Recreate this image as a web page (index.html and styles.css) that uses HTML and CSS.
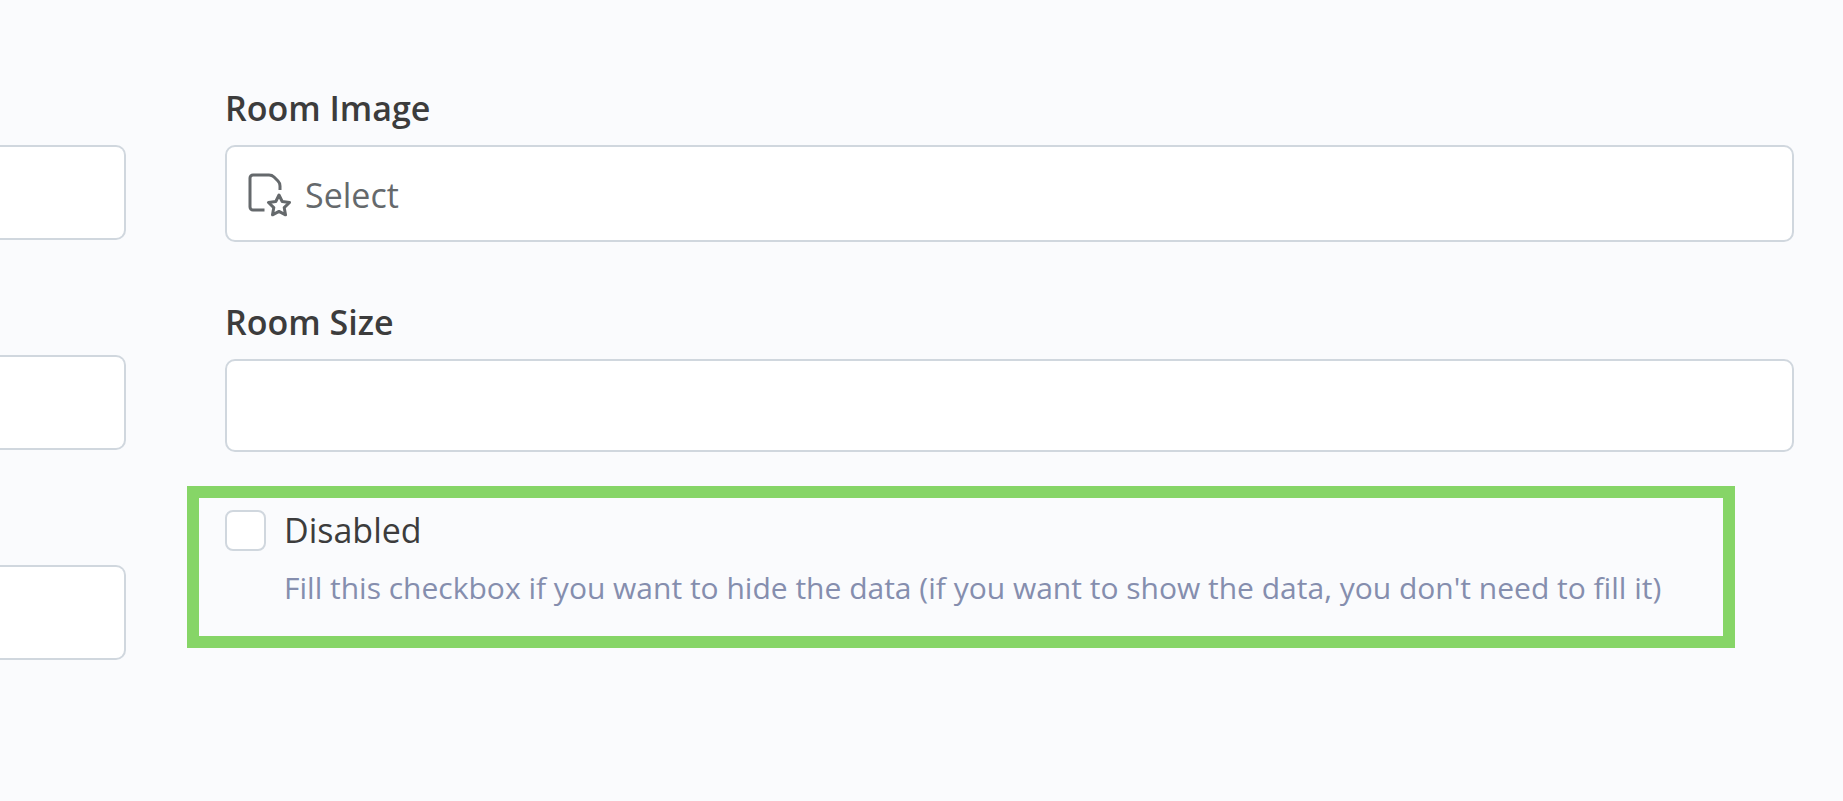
FILE: index.html
```html
<!DOCTYPE html>
<html lang="en">
<head>
<meta charset="utf-8">
<meta name="viewport" content="width=device-width, initial-scale=1">
<title>Room</title>
<link rel="stylesheet" href="styles.css">
</head>
<body>
<form class="form">
  <div class="side">
    <input class="control side-control" type="text" aria-label="Field 1">
    <input class="control side-control" type="text" aria-label="Field 2">
    <input class="control side-control" type="text" aria-label="Field 3">
  </div>
  <div class="main">
    <div class="field">
      <label class="label" for="room-image">Room Image</label>
      <button class="control picker" id="room-image" type="button">
        <svg class="picker-icon" viewBox="0 0 44 44" aria-hidden="true">
          <path d="M17.500 37H6a3 3 0 0 1-3-3V5a3 3 0 0 1 3-3h16q3 0 5 2l4 4q2 2 2 5v4"/>
          <path d="M32 22l3.200 6.500 7.300 1-5.300 5.100 1.300 7.200-6.500-3.400-6.500 3.400 1.300-7.200-5.300-5.100 7.300-1z"/>
        </svg>
        <span>Select</span>
      </button>
    </div>
    <div class="field">
      <label class="label" for="room-size">Room Size</label>
      <input class="control size" id="room-size" type="text">
    </div>
    <div class="highlight">
      <input class="check" id="disabled" type="checkbox" aria-describedby="disabled-hint">
      <label class="check-label" for="disabled">Disabled</label>
      <p class="hint" id="disabled-hint">Fill this checkbox if you want to hide the data (if you want to show the data, you don't need to fill it)</p>
    </div>
  </div>
</form>
</body>
</html>
```
FILE: styles.css
```css
* {
  box-sizing: border-box;
}

body {
  margin: 0;
  background: #fafbfd;
  color: #3c3c3c;
  font-family: "Open Sans", "Noto Sans", sans-serif;
}

.form {
  display: grid;
  grid-template-columns: 126px minmax(0, 1fr);
  column-gap: 99px;
  padding-right: 49px;
}

.side {
  display: flex;
  flex-direction: column;
  gap: 115px;
  padding-top: 145px;
}

.main {
  padding-top: 84px;
}

.control {
  display: block;
  width: 100%;
  height: 95px;
  margin: 0;
  padding: 0 20px;
  border: 2px solid #d0d7de;
  border-radius: 10px;
  background: #fff;
  color: #65696c;
  font: inherit;
  font-size: 34px;
}

.side-control {
  border-left: 0;
  border-radius: 0 10px 10px 0;
}

.field {
  margin-bottom: 56px;
}

.label {
  display: block;
  padding-bottom: 13px;
  font-size: 34px;
  font-weight: 600;
  line-height: 48px;
}

.picker {
  display: flex;
  align-items: center;
  gap: 14px;
  height: 97px;
  padding-top: 2px;
  text-align: left;
}

.picker-icon {
  width: 44px;
  height: 44px;
  fill: none;
  stroke: #65696c;
  stroke-width: 3;
  stroke-linejoin: round;
}

.size {
  height: 93px;
}

.highlight {
  display: grid;
  grid-template-columns: 41px minmax(0, 1fr);
  column-gap: 18px;
  align-items: center;
  margin: -22px 59px 0 -38px;
  padding: 4px 26px 24px;
  border: 12px solid #86d567;
}

.check {
  appearance: none;
  width: 41px;
  height: 41px;
  margin: 0;
  border: 2px solid #d0d7de;
  border-radius: 8px;
  background: #fff;
}

.check:checked {
  background: #86d567;
}

.check-label {
  font-size: 34px;
  line-height: 56px;
}

.hint {
  grid-column: 2;
  margin: 6px 0 0;
  color: #858eae;
  font-size: 30px;
  line-height: 48px;
}
```
